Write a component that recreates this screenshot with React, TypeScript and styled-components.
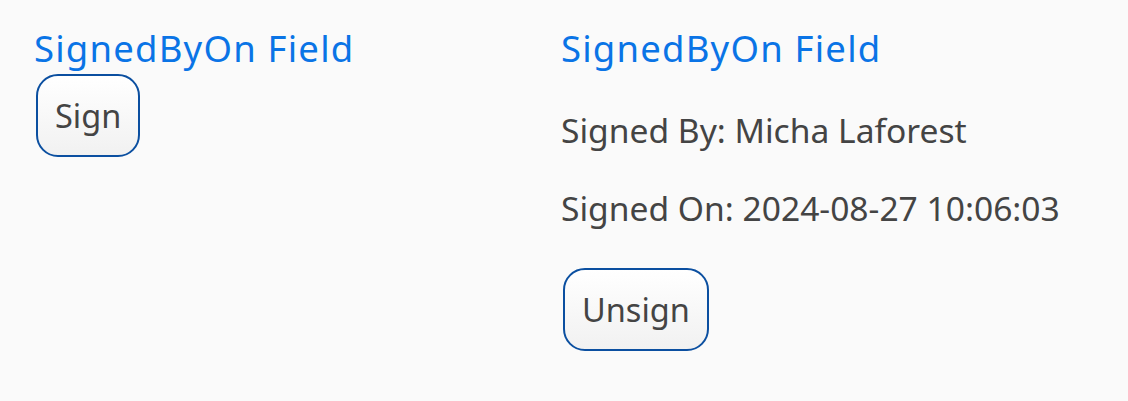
import React from "react";
import styled, { createGlobalStyle } from "styled-components";

const Global = createGlobalStyle`
  html, body { margin: 0; padding: 0; background: #fafafa; }
  body { font-family: "Noto Sans", "Open Sans", sans-serif; color: #444; }
`;

const Page = styled.div`
  display: grid;
  grid-template-columns: 527px 527px;
  padding: 24px 34px;
`;

const Column = styled.section`
  display: flex;
  flex-direction: column;
  align-items: flex-start;
`;

const Title = styled.h2`
  margin: 0;
  font-size: 36.5px;
  font-weight: 400;
  letter-spacing: 1.2px;
  line-height: 49px;
  color: #0a74e6;
`;

const Details = styled.div`
  display: flex;
  flex-direction: column;
  gap: 24px;
  margin-top: 30px;
`;

const Line = styled.p`
  margin: 0;
  font-size: 33.6px;
  line-height: 54px;
  color: #444;
`;

const Button = styled.button<{ $top: number }>`
  margin: ${(p) => p.$top}px 0 0 2px;
  height: 83px;
  padding: 0 17px;
  border: 2px solid #0b4fa0;
  border-radius: 22px;
  background: linear-gradient(#ffffff, #f1f1f1);
  font-family: inherit;
  font-size: 32.5px;
  color: #444;
`;

export default function App() {
  return (
    <>
      <Global />
      <Page>
        <Column>
          <Title>SignedByOn Field</Title>
          <Button $top={1}>Sign</Button>
        </Column>
        <Column>
          <Title>SignedByOn Field</Title>
          <Details>
            <Line>Signed By: Micha Laforest</Line>
            <Line>Signed On: 2024-08-27 10:06:03</Line>
          </Details>
          <Button $top={33}>Unsign</Button>
        </Column>
      </Page>
    </>
  );
}
